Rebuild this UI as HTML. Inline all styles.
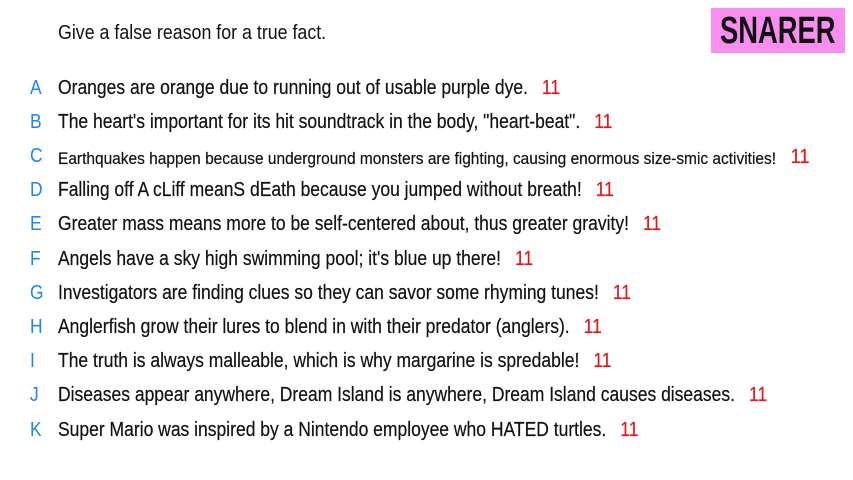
<!DOCTYPE html>
<html><head><style>
body{margin:0;width:853px;height:480px;background:#fff;overflow:hidden;font-family:"Liberation Sans",sans-serif;position:relative;color:#111}
.row{position:absolute;left:0;height:30px;white-space:nowrap}
.l{position:absolute;left:30px;color:#1d86e6;font-size:20px;top:0;transform:scaleX(0.87);transform-origin:left}
.t{position:absolute;left:58px;font-size:20px;top:0;transform:scaleX(0.875);transform-origin:left;-webkit-text-stroke:0.2px #111}
.n{color:#e0161b;margin-left:16px;-webkit-text-stroke:0.2px #e0161b}
.hdr{position:absolute;left:58px;top:22px;font-size:20px;transform:scaleX(0.89);transform-origin:left;white-space:nowrap}
.box{position:absolute;left:711px;top:8px;width:134px;height:45px;background:#f98ef0;overflow:hidden}
.box span{position:absolute;left:9px;top:0;font-size:38px;font-weight:bold;line-height:46px;color:#111;transform:scaleX(0.72);transform-origin:left;white-space:nowrap}
</style></head><body>
<div class="hdr">Give a false reason for a true fact.</div>
<div class="box"><span>SNARER</span></div>
<div class="row" style="top:77px"><span class="l">A</span><span class="t">Oranges are orange due to running out of usable purple dye.<span class="n">11</span></span></div>
<div class="row" style="top:111px"><span class="l">B</span><span class="t">The heart's important for its hit soundtrack in the body, "heart-beat".<span class="n">11</span></span></div>
<div class="row" style="top:145px"><span class="l">C</span><span class="t" style="font-size:17px;top:2px;transform:scaleX(0.91)">Earthquakes happen because underground monsters are fighting, causing enormous size-smic activities!<span class="n" style="font-size:20px;position:relative;top:-1px">11</span></span></div>
<div class="row" style="top:179px"><span class="l">D</span><span class="t">Falling off A cLiff meanS dEath because you jumped without breath!<span class="n">11</span></span></div>
<div class="row" style="top:213px"><span class="l">E</span><span class="t">Greater mass means more to be self-centered about, thus greater gravity!<span class="n">11</span></span></div>
<div class="row" style="top:248px"><span class="l">F</span><span class="t">Angels have a sky high swimming pool; it's blue up there!<span class="n">11</span></span></div>
<div class="row" style="top:282px"><span class="l">G</span><span class="t">Investigators are finding clues so they can savor some rhyming tunes!<span class="n">11</span></span></div>
<div class="row" style="top:316px"><span class="l">H</span><span class="t">Anglerfish grow their lures to blend in with their predator (anglers).<span class="n">11</span></span></div>
<div class="row" style="top:350px"><span class="l">I</span><span class="t">The truth is always malleable, which is why margarine is spredable!<span class="n">11</span></span></div>
<div class="row" style="top:384px"><span class="l">J</span><span class="t">Diseases appear anywhere, Dream Island is anywhere, Dream Island causes diseases.<span class="n">11</span></span></div>
<div class="row" style="top:419px"><span class="l">K</span><span class="t">Super Mario was inspired by a Nintendo employee who HATED turtles.<span class="n">11</span></span></div>
</body></html>
